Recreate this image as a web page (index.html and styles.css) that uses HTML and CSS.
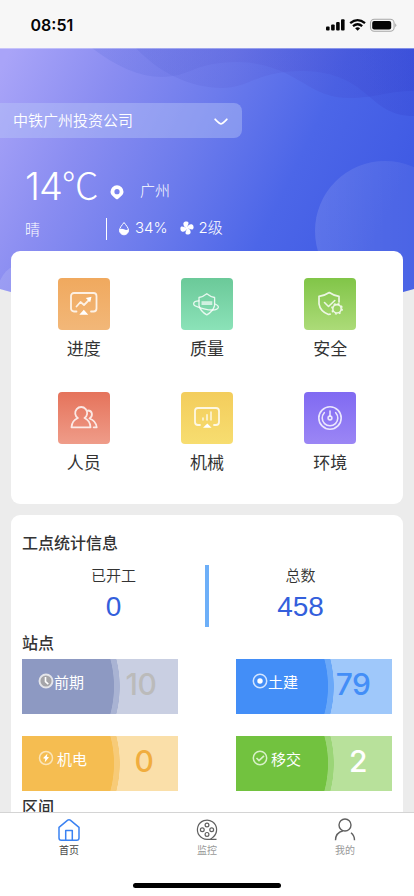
FILE: index.html
```html
<!DOCTYPE html>
<html lang="zh-CN">
<head>
<meta charset="utf-8">
<meta name="viewport" content="width=device-width, initial-scale=1">
<title>首页</title>
<link rel="stylesheet" href="styles.css">
</head>
<body>
<header class="status">
  <span class="clock">08:51</span>
  <svg class="status-icons" width="72" height="16" viewBox="0 0 72 16">
    <g fill="#050505"><rect x="1" y="9.6" width="3.6" height="4" rx="1"/><rect x="6.1" y="7.6" width="3.6" height="6" rx="1"/><rect x="11.1" y="5" width="3.6" height="8.6" rx="1"/><rect x="16" y="2.2" width="3.6" height="11.4" rx="1"/></g>
    <g fill="none" stroke="#050505" stroke-width="2.3"><path d="M25.2 6.2q7.4-6.2 14.8 0"/><path d="M28 9.2q4.6-3.8 9.2 0"/></g>
    <path d="M32.6 13.8l-2.5-2.5q2.5-1.9 5 0z" fill="#050505"/>
    <rect x="45.5" y="2.2" width="23.6" height="12" rx="3.8" fill="none" stroke="#a8a8a8" stroke-width="1.1"/>
    <rect x="47.2" y="3.900" width="19" height="8.600" rx="2" fill="#050505"/>
    <path d="M70.2 6.2q2.2 2 0 4z" fill="#a8a8a8"/>
  </svg>
</header>
<main class="content">
  <svg class="backdrop" width="414" height="262" viewBox="0 48 414 262">
    <defs>
      <linearGradient id="sky" gradientUnits="userSpaceOnUse" x1="0" y1="70" x2="370" y2="250">
        <stop offset="0" stop-color="#a9a4f8"/><stop offset=".25" stop-color="#8a8df1"/><stop offset=".5" stop-color="#6c7bec"/><stop offset=".75" stop-color="#4c66e8"/><stop offset="1" stop-color="#405be4"/>
      </linearGradient>
      <linearGradient id="wave" gradientUnits="userSpaceOnUse" x1="90" y1="0" x2="414" y2="0">
        <stop offset="0" stop-color="#5a6cdc" stop-opacity=".2"/><stop offset=".45" stop-color="#5b5fd6" stop-opacity=".23"/><stop offset="1" stop-color="#3444d0" stop-opacity=".32"/>
      </linearGradient>
      <linearGradient id="disc" x1="0" y1="0" x2="1" y2="0"><stop offset="0" stop-color="#fff" stop-opacity=".12"/><stop offset="1" stop-color="#fff" stop-opacity=".03"/></linearGradient>
      <clipPath id="dome"><path d="M0 48H414V289Q207 350 0 289Z"/></clipPath>
    </defs>
    <g clip-path="url(#dome)">
      <rect y="48" width="414" height="262" fill="url(#sky)"/>
      <path d="M92 48C116 66 138 77 162 77C190 77 194 62 238 62C298 64 305 98 350 98C375 98 388 91 414 91V48Z" fill="url(#wave)"/>
      <path d="M136 48C158 72 190 88 222 88C250 88 256 71 304 71C371 73 367 116 414 116V48Z" fill="url(#wave)"/>
      <circle cx="385" cy="231" r="70" fill="url(#disc)"/>
      <circle cx="26" cy="291" r="28" fill="#fff" fill-opacity=".13"/>
      <path d="M0 48.5H414" stroke="#fff" stroke-opacity=".35"/>
    </g>
  </svg>

  <section class="hero">
    <div class="picker"><span>中铁广州投资公司</span>
      <svg width="14" height="8" viewBox="0 0 14 8"><path d="M1.2 1.3Q5.8 5.9 7 5.9T12.800 1.300" fill="none" stroke="#fff" stroke-width="1.8" stroke-linecap="round"/></svg>
    </div>
    <div class="weather-main">
      <span class="temp">14<span class="unit">℃</span></span>
      <svg class="pin" width="14" height="15" viewBox="0 0 14 15"><path fill="#fff" fill-rule="evenodd" d="M7 .3a6.500 6.500 0 0 1 6.500 6.500c0 2.900-2.700 4.800-5.500 7.100a1.500 1.500 0 0 1-2 0C3.200 11.600.5 9.700.5 6.800A6.500 6.500 0 0 1 7 .3zM7 4.100a2.600 2.600 0 1 0 0 5.200a2.600 2.600 0 0 0 0-5.200z"/></svg>
      <span class="city">广州</span>
    </div>
    <div class="weather-detail">
      <span class="sky">晴</span>
      <span class="fact humidity"><svg width="12" height="15" viewBox="0 0 12 15"><path d="M6 1.500C8 4.200 10.500 6.800 10.500 9.300a4.500 4.500 0 0 1-9 0C1.500 6.800 4 4.200 6 1.500z" fill="none" stroke="#fff"/><path d="M1.500 8.300q2.300-1.300 4.500 0t4.500 0v1a4.500 4.500 0 0 1-9 0z" fill="#fff"/></svg>34%</span>
      <span class="fact"><svg width="14" height="14" viewBox="0 0 14 14" fill="#fff"><path id="blade" d="M6.600 7.200C4.200 6.200 2.800 3.800 3.600 1.800C4.400 .1 7.900-.1 8.400 1.500C8.900 3.200 7.300 4.200 7.200 7.200z"/><use href="#blade" transform="rotate(90 7 7)"/><use href="#blade" transform="rotate(180 7 7)"/><use href="#blade" transform="rotate(270 7 7)"/></svg>2级</span>
    </div>
  </section>

  <section class="card menu">
    <a class="entry"><span class="tile orange"><svg width="30" height="26" viewBox="0 0 30 26"><path d="M7.500 20.500H5a3 3 0 0 1-3-3V5a3 3 0 0 1 3-3h19.500a3 3 0 0 1 3 3v12.500a3 3 0 0 1-3 3H22"/><path d="M7.500 15.500l4-4.500 3.500 3 6-6"/><path class="solid" d="M16.800 7l5.700-1.300-1.300 5.600zM10.300 23.700l4.500-5 4.500 5z"/></svg></span><span>进度</span></a>
    <a class="entry"><span class="tile mint"><svg width="30" height="26" viewBox="0 0 30 26"><g stroke-width="1.300"><path d="M7 6.500q4.500-1 7.800-3.800q3.300 2.800 7.800 3.800v8q-1.500 6-7.800 9.300Q8.500 20.500 7 14.500z"/><path d="M7 9.800C0 10 .5 14.500 5 15.600c5 2 10 3.400 15 3.400c7 .2 8.600-4 3-6"/></g><path d="M9.500 10.200h10.800v3.800H9.500z" class="solid soft"/></svg></span><span>质量</span></a>
    <a class="entry"><span class="tile green"><svg width="30" height="26" viewBox="0 0 30 26"><path d="M24 11V5.300q-5.500-.8-9.700-3.800Q10 4.500 4 5.300v7.500q1 7.200 9.500 10.700l1.600-.3" stroke-width="1.700"/><path d="M9.500 11.500l4 4 6.300-6" stroke-width="1.600"/><circle cx="22" cy="17.800" r="4.200" stroke-width="1.600"/><circle cx="22" cy="17.800" r="5.300" stroke-width="1.300" stroke-linecap="butt" stroke-dasharray="2 2.163"/></svg></span><span>安全</span></a>
    <a class="entry"><span class="tile red"><svg width="30" height="26" viewBox="0 0 30 26"><path d="M8.900 13a6 6 0 1 1 6.600 0c3.900 1.700 5.800 5 6 9.300H2.500c.2-4.300 2.500-7.600 6.400-9.300z"/><path d="M19 5.500c4.600.2 5.300 5.600 1.500 8c4.500 1.500 6.700 5 7.200 8.800h-3"/></svg></span><span>人员</span></a>
    <a class="entry"><span class="tile yellow"><svg width="30" height="26" viewBox="0 0 30 26"><path d="M8 20H6a3 3 0 0 1-3-3V6a3 3 0 0 1 3-3h18a3 3 0 0 1 3 3v11a3 3 0 0 1-3 3h-2"/><path d="M11 13v2M15 9.800v5.200M19 7v8" stroke-width="1.500"/><path class="solid" d="M11 22.800l4.300-4.300 4.300 4.300z"/></svg></span><span>机械</span></a>
    <a class="entry"><span class="tile purple"><svg width="30" height="26" viewBox="0 0 30 26"><g stroke-width="1.600"><circle cx="15" cy="13" r="11.200"/><path d="M9.300 7.700a7.800 7.800 0 1 0 11.400 0"/><path d="M15 6v5"/><circle cx="15" cy="13" r="1.900"/></g></svg></span><span>环境</span></a>
  </section>

  <section class="card stats">
    <h2>工点统计信息</h2>
    <div class="totals">
      <div class="total"><span>已开工</span><b>0</b></div>
      <i class="rule"></i>
      <div class="total"><span>总数</span><b>458</b></div>
    </div>
    <h2>站点</h2>
    <div class="stations">
      <div class="station early"><svg width="16" height="16" viewBox="0 0 16 16"><circle cx="8" cy="8" r="6.500" fill="#a5a5a9" stroke="#e4e5ea" stroke-width="1.900"/><path d="M7.500 4v4.700l2.800 2.500" fill="none" stroke="#fff" stroke-width="1.600"/></svg><span>前期</span><b>10</b></div>
      <div class="station civil"><svg width="16" height="16" viewBox="0 0 16 16"><circle cx="8" cy="8" r="6.700" fill="none" stroke="#d2e5ff" stroke-width="1.500"/><circle cx="8" cy="8" r="2.700" fill="#fff"/></svg><span>土建</span><b>79</b></div>
      <div class="station power spaced"><svg width="16" height="16" viewBox="0 0 16 16"><circle cx="8" cy="8" r="6.500" fill="none" stroke="#fbe5b9" stroke-width="1.500"/><path d="M9.500 3.500L5 8.200l2.300.6-.6 3.700 4.300-5.300-2.200-.5z" fill="#fff"/></svg><span>机电</span><b>0</b></div>
      <div class="station handover spaced"><svg width="16" height="16" viewBox="0 0 16 16" fill="none" stroke="#d8f1c9"><circle cx="8" cy="8" r="6.700" stroke-width="1.500"/><path d="M4.500 8l2.500 2.500 5-4.700" stroke-width="1.700"/></svg><span>移交</span><b>2</b></div>
    </div>
    <h2>区间</h2>
  </section>
</main>
<nav class="tabs">
  <a class="tab active"><svg width="24" height="24" viewBox="0 0 24 24" fill="none" stroke="#3a82f2" stroke-width="1.500" stroke-linejoin="round"><path d="M2 9.300L10.700 2.200q1.300-1 2.600 0L22 9.300V20a2.300 2.300 0 0 1-2.300 2.300H4.300A2.300 2.300 0 0 1 2 20z"/><path d="M8.700 22V12.500h6.600V22"/></svg>首页</a>
  <a class="tab"><svg width="24" height="24" viewBox="0 0 24 24" fill="none" stroke="#606060" stroke-width="1.200"><path d="M21.500 21.300H12A9.600 9.600 0 1 1 18 19.200q-1.500 1.500-3 2"/><circle cx="12" cy="7" r="1.900"/><circle cx="7.300" cy="11.700" r="1.900"/><circle cx="16.700" cy="11.700" r="1.900"/><circle cx="12" cy="16.400" r="1.900"/></svg>监控</a>
  <a class="tab"><svg width="24" height="24" viewBox="0 0 24 24" fill="none" stroke="#606060" stroke-width="1.400"><circle cx="12" cy="7" r="6"/><path d="M10 12.800C5.500 14 2.500 17.500 2.500 22.300M18 14.800c2.300 1.800 3.500 4.200 3.500 7.500"/></svg>我的</a>
  <i class="home-bar"></i>
</nav>
</body>
</html>
```
FILE: styles.css
```css
* { box-sizing: border-box; }
body {
  margin: 0;
  width: 414px;
  height: 896px;
  overflow: hidden;
  display: flex;
  flex-direction: column;
  background: #ececec;
  color: #333;
  font-family: Inter, "Noto Sans CJK SC", sans-serif;
}
svg { display: block; flex: none; }

.status {
  flex: none;
  height: 48px;
  padding: 1px 17px 0 30.5px;
  display: flex;
  align-items: center;
  justify-content: space-between;
  background: #f7f7f7;
}
.clock { font-size: 16px; font-weight: 600; color: #050505; line-height: 20px; }
.status-icons { margin-top: 0; }

.content { flex: 1; min-height: 0; position: relative; overflow: hidden; }
.backdrop { position: absolute; top: 0; left: 0; }

.hero {
  position: relative;
  height: 203px;
  padding-top: 55px;
  color: #fff;
  font-weight: 300;
}
.picker {
  width: 242px;
  height: 35px;
  padding: 0 14px 3px 13px;
  display: flex;
  align-items: center;
  justify-content: space-between;
  border-radius: 0 8px 8px 0;
  background: rgba(186, 199, 249, .42);
  font-size: 15px;
  font-weight: 350;
}
.picker svg { margin-top: 5px; }
.weather-main { display: flex; height: 44px; margin-top: 26px; padding-left: 25px; align-items: center; }
.temp { font-size: 38px; line-height: 44px; width: 85px; white-space: nowrap; letter-spacing: -1px; }
.unit { font-family: "Noto Sans CJK SC", sans-serif; font-size: 37px; line-height: 1; letter-spacing: 0; }
.pin { margin-top: 13px; }
.city { margin: 7px 0 0 16px; font-size: 15px; }
.weather-detail { display: flex; height: 22px; margin-top: 10px; padding-left: 25px; align-items: center; font-size: 15px; }
.sky { width: 81px; margin-top: -2px; }
.fact { display: flex; align-items: center; gap: 5px; height: 22px; line-height: 20px; padding-bottom: 2px; margin-right: 12px; }
.humidity { border-left: 1px solid #fff; padding-left: 11px; }

.card { position: relative; width: 392px; margin: 0 11px; border-radius: 9px; background: #fff; }
.menu {
  height: 253px;
  padding: 27px 11px 0;
  display: grid;
  grid-template-columns: repeat(3, 1fr);
  grid-auto-rows: 114px;
}
.entry { display: flex; flex-direction: column; align-items: center; font-size: 17px; line-height: 24px; gap: 7px; }
.tile { width: 52px; height: 52px; border-radius: 4px; display: grid; place-items: center; }
.tile svg { fill: none; stroke: rgba(255, 255, 255, .82); stroke-width: 1.8; stroke-linejoin: round; stroke-linecap: round; }
.tile .solid { fill: #fff; stroke: none; }
.tile .soft { fill: rgba(255, 255, 255, .65); }
.orange { background: linear-gradient(#f0a95e, #f2b778); }
.mint { background: linear-gradient(#6bc999, #8be2b8); }
.green { background: linear-gradient(#81c548, #acdb78); }
.red { background: linear-gradient(#e5735b, #ef9c89); }
.yellow { background: linear-gradient(#f3cd5c, #f7dd70); }
.purple { background: linear-gradient(#806af2, #9b86f5); }

.stats { margin-top: 11px; padding: 16px 11px 0; height: 420px; }
h2 { margin: 0; font-size: 16px; line-height: 24px; font-weight: 500; color: #333; }
.totals { display: grid; grid-template-columns: 183px 4px 183px; height: 61px; margin: 10px 0 5px; }
.total { display: flex; flex-direction: column; align-items: center; font-size: 15px; line-height: 22px; font-weight: 350; }
.total b { font-family: "Liberation Sans", sans-serif; font-size: 28px; line-height: 40px; font-weight: 400; color: #345fdc; }
.rule { background: #6daff8; }
.stations { display: grid; grid-template-columns: 156px 156px; justify-content: space-between; row-gap: 22px; margin: 4px 0; }
.station {
  height: 55px;
  display: flex;
  align-items: center;
  padding: 0 0 6px 16px;
  color: #fff;
  font-size: 15px;
  background: radial-gradient(ellipse 98px 105px at 0 50%, var(--deep) 93.500%, var(--mid) 94.200%, var(--mid) 99.500%, var(--pale) 100%);
}
.station svg { margin-bottom: 5px; }
.station span { width: 50px; line-height: 22px; margin-bottom: 1px; }
.station b { flex: 1; text-align: center; font-size: 30px; line-height: 36px; font-weight: 500; letter-spacing: -.5px; color: var(--num); }
.spaced span { width: 56px; padding-left: 3px; }
.civil span { width: 46px; }
.early { --deep: #8d99c2; --mid: #a9b3d3; --pale: #c9cfe2; --num: #bbb; }
.civil { --deep: #438ef7; --mid: #6aa8f8; --pale: #9fc8fa; --num: #438ef7; }
.power { --deep: #f5bd51; --mid: #f7cb78; --pale: #fadfa9; --num: #f0ad3e; }
.handover { --deep: #72c23f; --mid: #9bd577; --pale: #b8e19b; --num: #fff; }

.tabs {
  position: relative;
  flex: none;
  height: 84px;
  padding: 5px 0 0;
  border-top: 1px solid #d4d4d4;
  background: #fff;
  display: grid;
  grid-template-columns: repeat(3, 1fr);
}
.tab { display: flex; flex-direction: column; align-items: center; gap: 1px; font-size: 10px; line-height: 15px; color: #999; }
.active { color: #444; }
.home-bar { position: absolute; left: 133px; bottom: 8px; width: 148px; height: 5px; border-radius: 3px; background: #000; }
```
